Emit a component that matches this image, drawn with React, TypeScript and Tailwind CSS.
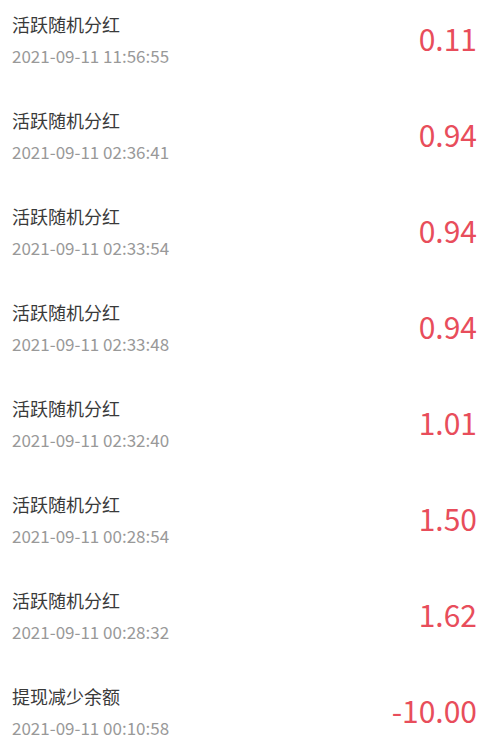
import React from 'react';

const records = [
  { title: '活跃随机分红', time: '2021-09-11 11:56:55', amount: '0.11' },
  { title: '活跃随机分红', time: '2021-09-11 02:36:41', amount: '0.94' },
  { title: '活跃随机分红', time: '2021-09-11 02:33:54', amount: '0.94' },
  { title: '活跃随机分红', time: '2021-09-11 02:33:48', amount: '0.94' },
  { title: '活跃随机分红', time: '2021-09-11 02:32:40', amount: '1.01' },
  { title: '活跃随机分红', time: '2021-09-11 00:28:54', amount: '1.50' },
  { title: '活跃随机分红', time: '2021-09-11 00:28:32', amount: '1.62' },
  { title: '提现减少余额', time: '2021-09-11 00:10:58', amount: '-10.00' },
];

const App = () => {
  return (
    <div
      className="w-[488px] h-[735px] overflow-hidden bg-white"
      style={{ fontFamily: '"Noto Sans CJK SC", "Noto Sans", sans-serif' }}
    >
      {records.map((r, i) => (
        <div key={i} className="h-[96px] pl-3 pr-[11px] pt-[12px] flex items-start justify-between">
          {/* left: title + time */}
          <div className="flex flex-col">
            <span className="text-[18px] leading-[24px] text-[#3a3a3a]">{r.title}</span>
            <span className="mt-[14px] text-[17px] leading-[12px] text-[#999999]">{r.time}</span>
          </div>
          {/* right: amount */}
          <span className="mt-[8px] text-[30px] leading-[36px] text-[#e84d5b]">{r.amount}</span>
        </div>
      ))}
    </div>
  );
};

export default App;
